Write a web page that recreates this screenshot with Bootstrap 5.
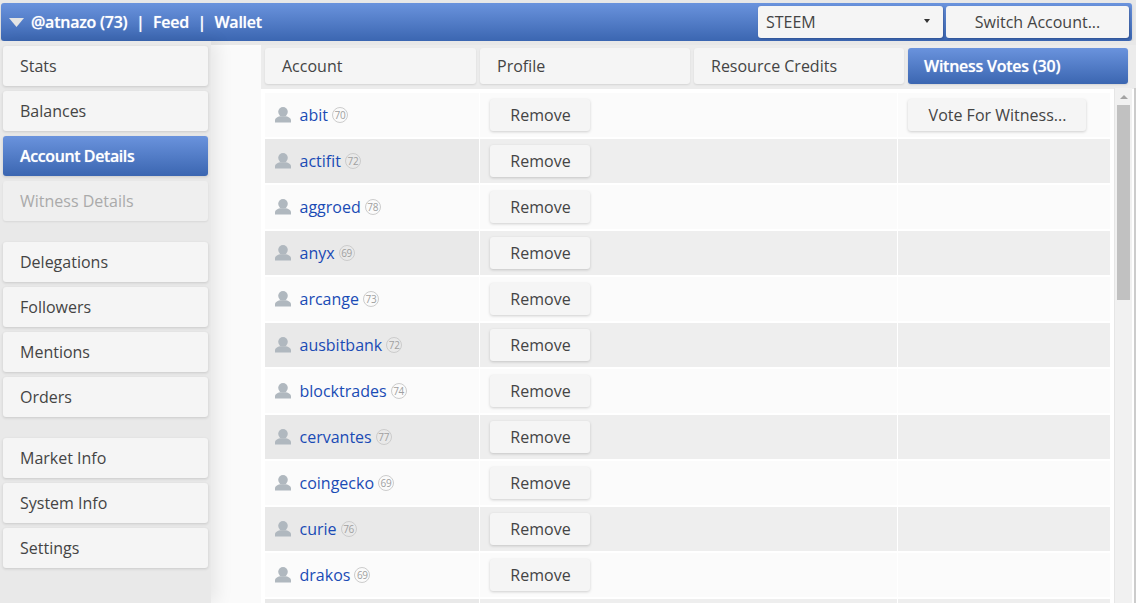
<!DOCTYPE html>
<html lang="en"><head><meta charset="utf-8"><title>Witness Votes</title>
<link rel="stylesheet" href="https://cdn.jsdelivr.net/npm/bootstrap@5.3.0/dist/css/bootstrap.min.css">
<style>
html,body{height:603px;overflow:hidden}
body{font-family:"Open Sans",sans-serif;font-size:16px;color:#444;background:#fafafa;margin:0;position:relative}
.shell{height:603px;width:1136px;display:flex;flex-direction:column}
.topstrip{height:41px;flex:none;padding:3px 4px 0 1px;background:#e8e8e8}
.topbar{height:38px;background:linear-gradient(#6a93dd,#3b66b1);border-radius:3px;color:#fff;font-weight:600;padding:3px 3px 3px 8px;text-shadow:0 0 1px rgba(255,255,255,.6);letter-spacing:-.25px;box-shadow:0 2px 3px rgba(0,0,0,.12)}
.tri{width:15px;height:9px;background:#e4e4e4;clip-path:polygon(0 0,100% 0,50% 100%);margin-right:7px;margin-top:1px}
.sep{margin:0 8.500px}
.sel{width:185px;height:32px;background:#f5f5f5;border-radius:3px;padding:0 8px;color:#444;font-weight:400;text-shadow:none;letter-spacing:0;box-shadow:1px 1px 2px rgba(20,40,90,.35)}
.caret2{width:0;height:0;border-left:3px solid transparent;border-right:3px solid transparent;border-top:4px solid #333;margin-right:5px;margin-bottom:3px}
.sw{width:183px;height:32px;margin-left:3px;background:#f5f5f5;border-radius:3px;color:#444;font-weight:400;text-shadow:none;letter-spacing:0;box-shadow:1px 1px 2px rgba(20,40,90,.35)}
.side{width:211px;flex:none;background:#e9e9e9;box-shadow:6px 0 16px rgba(0,0,0,.08);padding:5px 3px 0;height:562px;position:relative}
.sideitem{height:40px;width:205px;margin-bottom:5px;background:#f5f5f5;border-radius:3px;padding-left:17px;display:flex;align-items:center;box-shadow:0 1px 3px rgba(0,0,0,.14);color:#444}
.sideitem.gapb{margin-bottom:21px}
.sideitem.on,.tabi.on{background:linear-gradient(#6a93dd,#3b66b1);color:#fff;font-weight:600;text-shadow:0 0 1px rgba(255,255,255,.6)}
.sideitem.on{letter-spacing:-.4px}
.tabi.on{letter-spacing:-.25px}
.sideitem.off{color:#aaa;box-shadow:0 1px 2px rgba(0,0,0,.08);background:#efefef}
.maina{flex:1;min-width:0;padding:4px 0 0 50px;background:linear-gradient(#e8e8e8 4px,#fafafa 4px)}
.tabsr{height:44px;padding:3px 4px 0 4px;gap:4px;background:#ececec}
.tabi{height:36px;width:211px;background:#f5f5f5;border-radius:3px;padding-left:17px;display:flex;align-items:center;box-shadow:0 1px 2px rgba(0,0,0,.1)}
.tabi.w4{width:220px;padding-left:16px}
.tabi.w2{width:210px;padding-left:17px}
.vrows{padding:4px 0 0 4px;height:515px;overflow:hidden;background:#fff}
.rowi{height:46px;width:845px;display:flex;border-bottom:2px solid #fff;background:#fbfbfb}
.rowi:nth-child(even){background:#e9e9e9}
.cola{width:215px;display:flex;align-items:center;padding-left:10px;border-right:1px solid #fff;flex:none}
.colb{width:418px;flex:none;padding-left:10px;border-right:1px solid #fff;display:flex;align-items:center}
.colc{width:212px;flex:none;padding-left:10px;display:flex;align-items:center}
.rowi:nth-child(even) .colb,.rowi:nth-child(even) .colc{background:#eeeeee}
.who{width:16px;height:16px;margin-right:8.500px;flex:none}
.nm{color:#1a4bb5;text-decoration:none}
.rep{width:16px;height:16px;border:1px solid #ccc;border-radius:50%;font-size:10px;color:#a0a0a0;display:inline-flex;align-items:center;justify-content:center;margin-left:4px;line-height:1;letter-spacing:-.3px}
.rmb{width:100px;height:32px;background:#f5f5f5;border-radius:3px;display:flex;align-items:center;justify-content:center;padding-left:1px;box-shadow:0 1px 3px rgba(0,0,0,.18)}
.vfw{width:178px}
.sbar{position:absolute;left:1114px;top:88px;width:18px;height:515px;background:#f1f1f1;border-left:1px solid #e6e6e6}
.sthumb{position:absolute;left:2px;top:17px;width:13px;height:195px;background:#c1c1c1}
.sup{position:absolute;left:5px;top:7px;width:0;height:0;border-left:4px solid transparent;border-right:4px solid transparent;border-bottom:4px solid #a3a3a3}
.redge{position:absolute;left:1134px;top:88px;width:2px;height:515px;background:#ccc}
</style></head>
<body>
<div class="shell">
  <div class="topstrip"><div class="topbar d-flex align-items-center">
    <span class="tri"></span><span>@atnazo (73)</span><span class="sep">|</span><span>Feed</span><span class="sep">|</span><span>Wallet</span>
    <div class="sel d-flex align-items-center justify-content-between ms-auto"><span>STEEM</span><span class="caret2"></span></div>
    <div class="sw d-flex align-items-center justify-content-center">Switch Account...</div>
  </div></div>
  <div class="d-flex flex-grow-1">
    <nav class="side">
      <div class="sideitem">Stats</div><div class="sideitem">Balances</div><div class="sideitem on">Account Details</div><div class="sideitem off gapb">Witness Details</div>
      <div class="sideitem">Delegations</div><div class="sideitem">Followers</div><div class="sideitem">Mentions</div><div class="sideitem gapb">Orders</div>
      <div class="sideitem">Market Info</div><div class="sideitem">System Info</div><div class="sideitem">Settings</div>
    </nav>
    <main class="maina">
      <div class="tabsr d-flex"><div class="tabi">Account</div><div class="tabi w2">Profile</div><div class="tabi w2">Resource Credits</div><div class="tabi w4 on">Witness Votes (30)</div></div>
      <div class="vrows" id="rows"></div>
    </main>
  </div>
</div>
<div class="sbar"><div class="sup"></div><div class="sthumb"></div></div>
<div class="redge"></div>
<script>
var d=[["abit",70],["actifit",72],["aggroed",78],["anyx",69],["arcange",73],["ausbitbank",72],["blocktrades",74],["cervantes",77],["coingecko",69],["curie",76],["drakos",69]];
document.getElementById('rows').innerHTML=d.map(function(r,i){return '<div class="rowi"><div class="cola"><svg class="who" viewBox="0 0 16 16"><ellipse cx="8" cy="4.800" rx="4.800" ry="4.800" fill="#b0b8bf"/><path d="M0 15.500v-2.600c0-1.800 2.500-3 5-3.700h6c2.500.7 5 1.900 5 3.700v2.600z" fill="#b0b8bf"/></svg><a class="nm" href="#">'+r[0]+'</a><span class="rep">'+r[1]+'</span></div><div class="colb"><div class="rmb">Remove</div></div><div class="colc">'+(i==0?'<div class="rmb vfw">Vote For Witness...</div>':'')+'</div></div>'}).join('')+'<div class="rowi"><div class="cola"></div><div class="colb"></div><div class="colc"></div></div>';
</script>
<script src="https://cdn.jsdelivr.net/npm/bootstrap@5.3.0/dist/js/bootstrap.bundle.min.js"></script>
</body></html>
